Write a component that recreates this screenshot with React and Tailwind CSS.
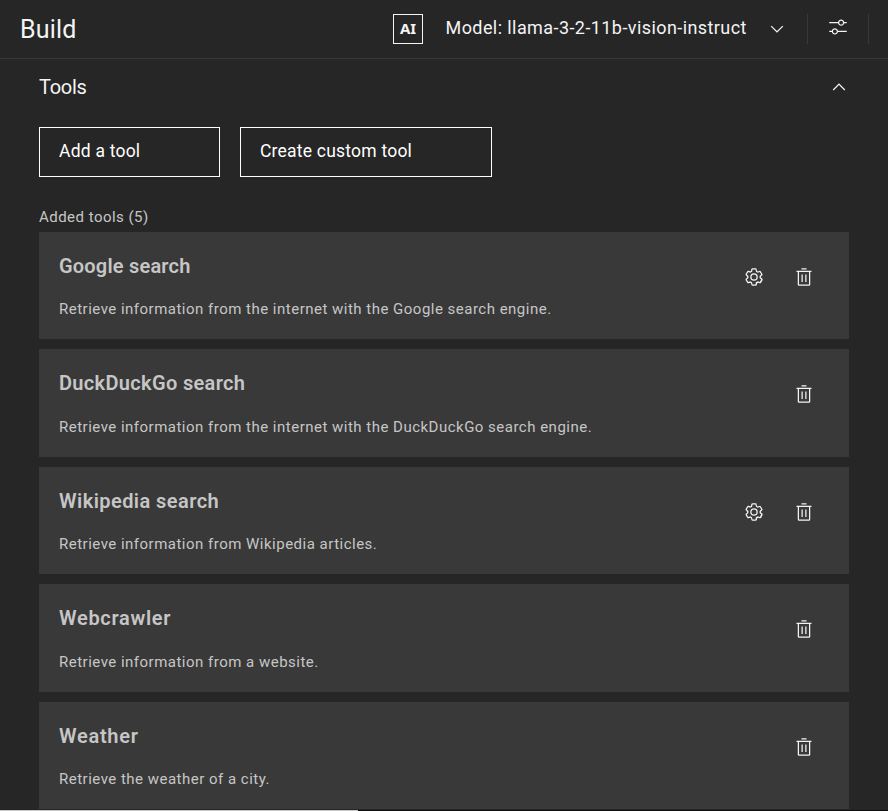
import React from 'react';

const tools = [
  { name: 'Google search', spacing: 'tracking-[0.2px]', description: 'Retrieve information from the internet with the Google search engine.', configurable: true },
  { name: 'DuckDuckGo search', spacing: 'tracking-[0.33px]', description: 'Retrieve information from the internet with the DuckDuckGo search engine.' },
  { name: 'Wikipedia search', spacing: 'tracking-[0.44px]', description: 'Retrieve information from Wikipedia articles.', configurable: true },
  { name: 'Webcrawler', spacing: 'tracking-[0.7px]', description: 'Retrieve information from a website.' },
  { name: 'Weather', spacing: 'tracking-[0.72px]', description: 'Retrieve the weather of a city.' },
];

function Chevron({ className = '' }) {
  return (
    <svg viewBox="0 0 16 16" className={`size-5 shrink-0 fill-[#f4f4f4] ${className}`}>
      <path d="M8 11L3 6 3.7 5.3 8 9.6 12.3 5.3 13 6z" />
    </svg>
  );
}

function Sliders() {
  return (
    <svg viewBox="0 0 32 32" className="size-5 fill-[#f4f4f4]">
      <path d="M30,8h-4.1c-0.5-2.3-2.5-4-4.9-4s-4.4,1.7-4.9,4H2v2h14.1c0.5,2.3,2.5,4,4.9,4s4.4-1.7,4.9-4H30V8z M21,12c-1.7,0-3-1.3-3-3s1.3-3,3-3s3,1.3,3,3S22.7,12,21,12z M2,24h4.1c0.5,2.3,2.5,4,4.9,4s4.4-1.7,4.9-4H30v-2H15.9c-0.5-2.3-2.5-4-4.9-4s-4.4,1.7-4.9,4H2V24z M11,20c1.7,0,3,1.3,3,3s-1.3,3-3,3s-3-1.3-3-3S9.3,20,11,20z" />
    </svg>
  );
}

function Gear() {
  return (
    <svg viewBox="0 0 16 16" className="size-5 fill-[#f4f4f4]">
      <path d="M13.5,8.4c0-0.1,0-0.3,0-0.4c0-0.1,0-0.3,0-0.4l1-0.8c0.4-0.3,0.4-0.9,0.2-1.3l-1.2-2C13.3,3.2,13,3,12.6,3c-0.1,0-0.2,0-0.3,0.1l-1.2,0.4c-0.2-0.1-0.4-0.3-0.7-0.4l-0.3-1.3C10.1,1.3,9.7,1,9.2,1H6.8c-0.5,0-0.9,0.3-1,0.8L5.6,3.1C5.3,3.2,5.1,3.3,4.9,3.4L3.7,3C3.6,3,3.5,3,3.4,3C3,3,2.7,3.2,2.5,3.5l-1.2,2C1.1,5.9,1.2,6.4,1.6,6.8l0.9,0.9c0,0.1,0,0.3,0,0.4c0,0.1,0,0.3,0,0.4L1.6,9.2c-0.4,0.3-0.5,0.9-0.2,1.3l1.2,2C2.7,12.8,3,13,3.4,13c0.1,0,0.2,0,0.3-0.1l1.2-0.4c0.2,0.1,0.4,0.3,0.7,0.4l0.3,1.3c0.1,0.5,0.5,0.8,1,0.8h2.4c0.5,0,0.9-0.3,1-0.8l0.3-1.3c0.2-0.1,0.4-0.2,0.7-0.4l1.2,0.4c0.1,0,0.2,0.1,0.3,0.1c0.4,0,0.7-0.2,0.9-0.5l1.1-2c0.2-0.4,0.2-0.9-0.2-1.3L13.5,8.4z M12.6,12l-1.7-0.6c-0.4,0.3-0.9,0.6-1.4,0.8L9.2,14H6.8l-0.4-1.8c-0.5-0.2-0.9-0.5-1.4-0.8L3.4,12l-1.2-2l1.4-1.2c-0.1-0.5-0.1-1.1,0-1.6L2.2,6l1.2-2l1.7,0.6C5.5,4.2,6,4,6.5,3.8L6.8,2h2.4l0.4,1.8c0.5,0.2,0.9,0.5,1.4,0.8L12.6,4l1.2,2l-1.4,1.2c0.1,0.5,0.1,1.1,0,1.6l1.4,1.2L12.6,12z" />
      <path fillRule="evenodd" d="M8 5a3 3 0 1 0 0 6a3 3 0 1 0 0-6z M8 6a2 2 0 1 1 0 4a2 2 0 1 1 0-4z" />
    </svg>
  );
}

function Trash() {
  return (
    <svg viewBox="0 0 32 32" className="size-5 fill-[#f4f4f4]">
      <path d="M12 12h2v12h-2z M18 12h2v12h-2z M12 2h8v2h-8z M4,6V8H6V28a2,2,0,0,0,2,2H24a2,2,0,0,0,2-2V8h2V6ZM8,28V8H24V28Z" />
    </svg>
  );
}

function ToolCard({ tool }) {
  return (
    <li className="flex h-[107.4px] shrink-0 justify-between bg-[#393939] pr-[35px] pl-5 text-[#c6c6c6]">
      <div className="pt-5">
        <h3 className={`text-[20px] leading-7 font-semibold ${tool.spacing}`}>{tool.name}</h3>
        <p className="mt-[19.4px] text-[15px] leading-5 tracking-[0.49px]">{tool.description}</p>
      </div>
      <div className="flex gap-[30px] pt-[35px]">
        {tool.configurable && <button className="size-5"><Gear /></button>}
        <button className="size-5"><Trash /></button>
      </div>
    </li>
  );
}

export default function App() {
  return (
    <div className="flex h-[811px] w-[888px] flex-col overflow-hidden bg-[#262626] font-[Roboto,sans-serif] text-[#f4f4f4]">
      <header className="flex h-[59px] shrink-0 items-center border-b border-[#393939] pl-5">
        <h1 className="w-[373px] pt-0.5 text-[25px] leading-8 tracking-[0.2px]">Build</h1>
        <span className="flex size-[30px] items-center justify-center border border-[#f4f4f4] pb-0.5 font-['Noto_Sans',sans-serif] text-[15px] font-bold">AI</span>
        <span className="ml-[22.5px] w-[321.5px] pb-[3px] text-[18px] tracking-[0.42px] whitespace-nowrap">Model: llama-3-2-11b-vision-instruct</span>
        <Chevron />
        <div className="ml-5 flex h-[30px] w-[62px] items-center justify-center border-x border-[#393939] pb-1">
          <Sliders />
        </div>
      </header>

      <main className="flex h-[750px] shrink-0 flex-col overflow-hidden px-[39px]">
        <div className="flex h-14 shrink-0 items-center justify-between">
          <h2 className="text-[20px] leading-7 tracking-[-0.3px]">Tools</h2>
          <Chevron className="rotate-180" />
        </div>
        <div className="mt-3 flex shrink-0 gap-5 text-[17.5px] tracking-[0.22px] text-white">
          <button className="h-[50px] w-[181px] border border-white pb-0.5 pl-[19px] text-left">Add a tool</button>
          <button className="h-[50px] w-[252px] border border-white pb-0.5 pl-[19px] text-left">Create custom tool</button>
        </div>
        <p className="mt-[30px] h-[25px] shrink-0 text-[15px] leading-5 tracking-[0.47px] text-[#c6c6c6]">Added tools (5)</p>
        <ul className="flex flex-col gap-2.5">
          {tools.map((tool) => <ToolCard key={tool.name} tool={tool} />)}
        </ul>
      </main>

      <footer className="mt-px h-px shrink-0 bg-[#0c0c0c]">
        <div className="h-px w-[358px] bg-[#c6c6c6]" />
      </footer>
    </div>
  );
}
